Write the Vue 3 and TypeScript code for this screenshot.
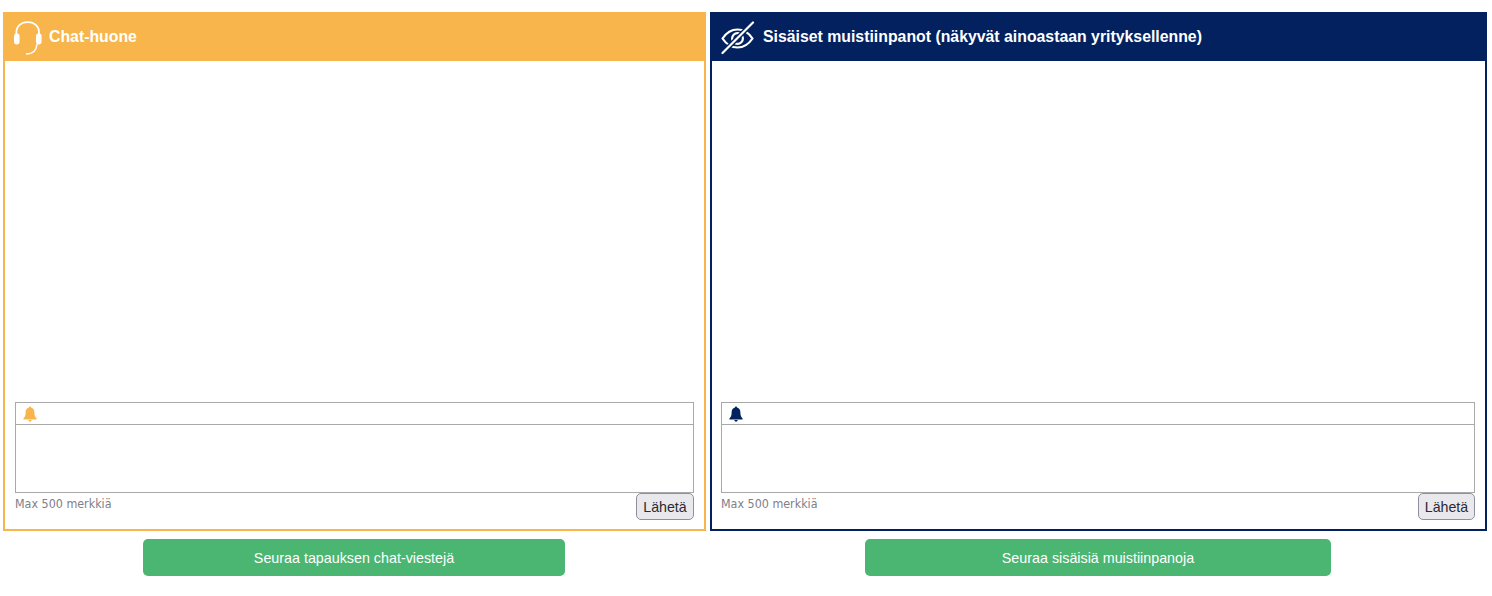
<script setup lang="ts">
interface Room {
  key: string
  title: string
  follow: string
}

const rooms: Room[] = [
  { key: 'chat', title: 'Chat-huone', follow: 'Seuraa tapauksen chat-viestejä' },
  { key: 'notes', title: 'Sisäiset muistiinpanot (näkyvät ainoastaan yrityksellenne)', follow: 'Seuraa sisäisiä muistiinpanoja' }
]
</script>

<template>
  <main class="page">
    <section v-for="room in rooms" :key="room.key" class="column" :class="room.key">
      <div class="panel">
        <header class="panel-head">
          <svg v-if="room.key === 'chat'" class="head-icon" width="30" height="36" viewBox="0 0 30 36" fill="none">
            <path d="M4.4 16V13.5C4.4 7 9.2 3.2 15.7 3.2C22.2 3.2 27 7 27 13.5V16" stroke="#fff" stroke-width="1.8" />
            <rect x="2" y="14.5" width="5.6" height="11" rx="2.4" fill="#fff" />
            <rect x="24" y="14.5" width="5.6" height="11" rx="2.4" fill="#fff" />
            <path d="M25 25.5C24.4 31.5 20.5 35 14.5 35" stroke="#fff" stroke-width="1.5" stroke-linecap="round" />
          </svg>
          <svg v-else class="head-icon" width="34" height="36" viewBox="0 0 34 36" fill="none">
            <path d="M1.5 19.5C5.5 13.5 10.5 10.5 16.5 10.5C22.5 10.5 27.5 13.5 31.5 19.5C27.5 25.5 22.5 28.5 16.5 28.5C10.5 28.5 5.5 25.5 1.5 19.5Z" stroke="#fff" stroke-width="2.2" stroke-linejoin="round" />
            <circle cx="16.5" cy="19.5" r="5.4" stroke="#fff" stroke-width="2.2" />
            <path d="M1.5 34L32 3.5" stroke="#03215f" stroke-width="5" />
            <path d="M1.5 34L32 3.5" stroke="#fff" stroke-width="2.2" stroke-linecap="round" />
          </svg>
          <h2>{{ room.title }}</h2>
        </header>
        <div class="messages"></div>
        <div class="composer">
          <div class="tools">
            <svg class="bell" width="14" height="16" viewBox="0 0 14 16">
              <path d="M7 0.5C7.7 0.5 8 1 8 1.6C10.4 2.2 11.4 4 11.4 6.6C11.4 9.6 12 11 13.6 12.6V13.4H0.4V12.6C2 11 2.6 9.6 2.6 6.6C2.6 4 3.6 2.2 6 1.6C6 1 6.3 0.5 7 0.5Z" />
              <path d="M5.4 14.1H8.6C8.6 15.1 7.9 15.7 7 15.7C6.1 15.7 5.4 15.1 5.4 14.1Z" />
            </svg>
          </div>
          <div class="editor"></div>
        </div>
        <div class="composer-foot">
          <small>Max 500 merkkiä</small>
          <button type="button" class="send">Lähetä</button>
        </div>
      </div>
      <button type="button" class="follow">{{ room.follow }}</button>
    </section>
  </main>
</template>

<style scoped>
.page {
  display: grid;
  grid-template-columns: 703px 777px;
  column-gap: 4px;
  padding: 12px 0 0 3px;
  font-family: "Liberation Sans", Arial, sans-serif;
}

.column {
  display: flex;
  flex-direction: column;
  align-items: center;
}

.chat {
  --accent: #f8b54b;
}

.notes {
  --accent: #03215f;
}

.panel {
  display: flex;
  flex-direction: column;
  box-sizing: border-box;
  width: 100%;
  height: 519px;
  border: 2px solid var(--accent);
  background: #fff;
}

.panel-head {
  display: flex;
  align-items: center;
  flex: none;
  box-sizing: border-box;
  height: 49px;
  margin: -2px -2px 0;
  background: var(--accent);
  color: #fff;
}

.chat .panel-head {
  padding-left: 9px;
  gap: 7px;
}

.notes .panel-head {
  padding-left: 11px;
  gap: 8px;
}

.panel-head h2 {
  margin: 0;
  font-size: 15.84px;
  font-weight: 700;
}

.messages {
  flex: 1;
}

.composer {
  flex: none;
  margin: 0 10px;
  border: 1px solid #a9a9a9;
}

.notes .composer,
.notes .composer-foot {
  margin-left: 9px;
}

.tools {
  display: flex;
  align-items: center;
  box-sizing: border-box;
  height: 22px;
  padding-left: 7px;
  border-bottom: 1px solid #a9a9a9;
}

.bell {
  fill: var(--accent);
}

.editor {
  height: 67px;
}

.composer-foot {
  display: flex;
  justify-content: space-between;
  align-items: flex-start;
  flex: none;
  height: 36px;
  margin: 0 10px;
}

.composer-foot small {
  margin-top: 3px;
  font-family: "DejaVu Sans", Verdana, sans-serif;
  font-size: 12.4px;
  font-stretch: condensed;
  color: #80808a;
}

.send {
  box-sizing: border-box;
  width: 58px;
  height: 27px;
  padding: 0;
  border: 1px solid #8f8f9d;
  border-radius: 5px;
  background: #e9e9ed;
  color: #2b2a33;
  font-family: "Liberation Sans", Arial, sans-serif;
  font-size: 14.2px;
}

.notes .send {
  width: 57px;
}

.follow {
  width: 60%;
  height: 37px;
  margin-top: 8px;
  margin-right: 1px;
  border: 0;
  border-radius: 5px;
  background: #4ab671;
  color: #fff;
  font-family: "Liberation Sans", Arial, sans-serif;
  font-size: 14.3px;
}
</style>
